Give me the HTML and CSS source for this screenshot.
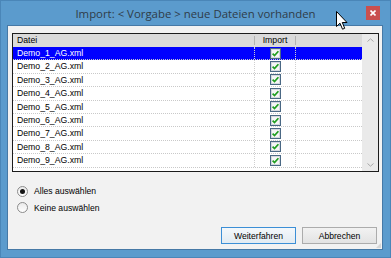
FILE: index.html
```html
<!DOCTYPE html>
<html lang = 'de'>
<head>
    <meta charset = 'UTF-8'>
    <title>Import</title>
    <link rel="stylesheet" href="styles.css">
</head>

<body>
    <div class = 'window'>
        <div class = 'titlebar'>
            <span></span>
            <span class = 'title'>Import: &lt; Vorgabe &gt; neue Dateien vorhanden</span>
            <span class = 'close'>
                <svg width = '6' height = '6' viewBox = '0 0 6 6'>
                    <path d = 'M0.5 0.5 L5.5 5.5 M5.5 0.5 L0.5 5.5' stroke = '#fff' stroke-width = '1.6'/>
                </svg>
            </span>
        </div>

        <div class = 'client'>
            <div class = 'listview'>
                <div class = 'lv-body'>
                    <div class = 'lv-header'>
                        <div class = 'col-name'>Datei</div>
                        <div class = 'col-import'>Import</div>
                        <div class = 'col-rest'></div>
                    </div>
                    <div id = 'rows'></div>
                </div>
                <div class = 'lv-scroll'>
                    <svg width = '7' height = '4' viewBox = '0 0 7 4'>
                        <path d = 'M0.5 3.5 L3.5 0.8 L6.5 3.5' fill = 'none' stroke = '#a9a9a9' stroke-width = '1'/>
                    </svg>
                    <svg width = '7' height = '4' viewBox = '0 0 7 4'>
                        <path d = 'M0.5 0.5 L3.5 3.2 L6.5 0.5' fill = 'none' stroke = '#a9a9a9' stroke-width = '1'/>
                    </svg>
                </div>
            </div>

            <div class = 'options'>
                <label class = 'option'><span class = 'radio checked'></span>Alles auswählen</label>
                <label class = 'option'><span class = 'radio'></span>Keine auswählen</label>
            </div>

            <div class = 'buttons'>
                <button class = 'btn default'>Weiterfahren</button>
                <button class = 'btn'>Abbrechen</button>
            </div>
            <span class = 'grip'></span>
        </div>

        <svg class = 'cursor' width = '13' height = '20' viewBox = '0 0 13 20'>
            <path d = 'M0.5 0.5 L0.5 15.5 L4 12.2 L6.5 18.2 L8.7 17.3 L6.3 11.5 L11 11.5 Z' fill = '#fff' stroke = '#000' stroke-width = '1' stroke-linejoin = 'round'/>
        </svg>
    </div>

    <script>
        const rows = document.getElementById('rows');
        for (let i = 1; i <= 9; i++) {
            const row = document.createElement('div');
            row.className = i === 1 ? 'lv-row selected' : 'lv-row';
            row.innerHTML = `
                <div class = 'col-name'>Demo_${i}_AG.xml</div>
                <div class = 'col-import'>
                    <svg width = '11' height = '11' viewBox = '0 0 11 11'>
                        <rect x = '0.5' y = '0.5' width = '10' height = '10' fill = '#fff' stroke = '#4a6884'/>
                        <rect x = '1.5' y = '1.5' width = '8' height = '8' fill = '#f6f6f6' stroke = '#d4d9de'/>
                        <path d = 'M2.6 5.6 L4.5 7.5 L8.4 3.2' fill = 'none' stroke = '#1f9e1f' stroke-width = '1.7'/>
                    </svg>
                </div>
                <div class = 'col-rest'></div>
            `;
            rows.appendChild(row);
        }
    </script>
</body>
</html>
```

FILE: styles.css
```css
body {
    margin : 0;
    font-family : "Liberation Sans", Arial, sans-serif;
}

.window {
    position : relative;
    width : 391px;
    height : 258px;
    background-color : #5b9bcd;
    display : flex;
    flex-direction : column;
    box-sizing : border-box;
    border : 1px solid #4a86b8;
}

.titlebar {
    height : 24px;
    display : grid;
    grid-template-columns : 1fr auto 1fr;
    align-items : center;
}

.title {
    font-family : "Open Sans", "Liberation Sans", sans-serif;
    font-size : 11.4px;
    color : #2f3b48;
    white-space : nowrap;
}

.close {
    justify-self : end;
    margin-right : 10px;
    width : 14px;
    height : 14px;
    background-color : #c9504f;
    display : flex;
    align-items : center;
    justify-content : center;
}

.client {
    position : relative;
    margin : 0 7px 7px 6px;
    flex : 1;
    background-color : #f2f2f2;
    border : 1px solid #4679a6;
    display : flex;
    flex-direction : column;
    padding : 7px 5px 5px 4px;
}

.listview {
    height : 139px;
    box-sizing : border-box;
    border : 1px solid #1c1c1c;
    background : white;
    display : flex;
    margin-right : -2px;
}

.lv-body {
    width : 350px;
    font-size : 8.7px;
}

.lv-header,
.lv-row {
    display : flex;
}

.lv-header {
    height : 13px;
    background-color : #dadada;
    align-items : center;
}

.lv-row {
    height : 13.4px;
    box-sizing : border-box;
    border-bottom : 1px dotted #c9c9c9;
    align-items : center;
}

.col-name {
    width : 241px;
    padding-left : 4px;
    box-sizing : border-box;
}

.col-import {
    width : 40px;
    text-align : center;
    display : flex;
    justify-content : center;
    align-items : center;
}

.col-rest {
    flex : 1;
}

.lv-header .col-name,
.lv-header .col-import {
    border-right : 1px solid #b2b2b2;
    height : 9px;
    line-height : 9px;
}

.lv-header .col-name {
    width : 242px;
}

.lv-row .col-name {
    width : 242px;
    border-right : 1px dotted #cfcfcf;
    height : 100%;
    line-height : 12px;
}

.lv-row .col-import {
    border-right : 1px dotted #cfcfcf;
    height : 100%;
}

.lv-row.selected {
    background-color : #0000ff;
    color : white;
}

.lv-scroll {
    width : 16px;
    background-color : #eaeaea;
    display : flex;
    flex-direction : column;
    justify-content : space-between;
    align-items : center;
    padding : 4px 0 4px;
}

.options {
    margin-top : 11px;
    margin-left : 5px;
    font-size : 8.6px;
}

.option {
    display : flex;
    align-items : center;
    height : 16.5px;
}

.radio {
    width : 9px;
    height : 9px;
    border : 1px solid #8c8c8c;
    border-radius : 50%;
    background : linear-gradient(#eaeaea, #ffffff);
    margin-right : 6px;
    display : flex;
    align-items : center;
    justify-content : center;
}

.radio.checked::after {
    content : '';
    width : 5px;
    height : 5px;
    border-radius : 50%;
    background-color : #151515;
}

.buttons {
    margin-top : auto;
    display : flex;
    justify-content : flex-end;
    gap : 6px;
}

.btn {
    width : 75px;
    height : 17px;
    padding : 0;
    font-family : "Liberation Sans", Arial, sans-serif;
    font-size : 8.6px;
    color : #000;
    border : 1px solid #acacac;
    background : linear-gradient(#f2f2f2, #e3e3e3);
}

.btn.default {
    border-color : #3c8fd6;
    background : linear-gradient(#f4f8fb, #e2ebf2);
}

.grip {
    position : absolute;
    right : 1px;
    bottom : 1px;
    width : 5px;
    height : 5px;
    background : radial-gradient(circle, #b5b5b5 0.6px, transparent 0.8px) 0 0 / 2px 2px;
    clip-path : polygon(100% 0, 100% 100%, 0 100%);
}

.cursor {
    position : absolute;
    left : 335px;
    top : 10px;
}
```
